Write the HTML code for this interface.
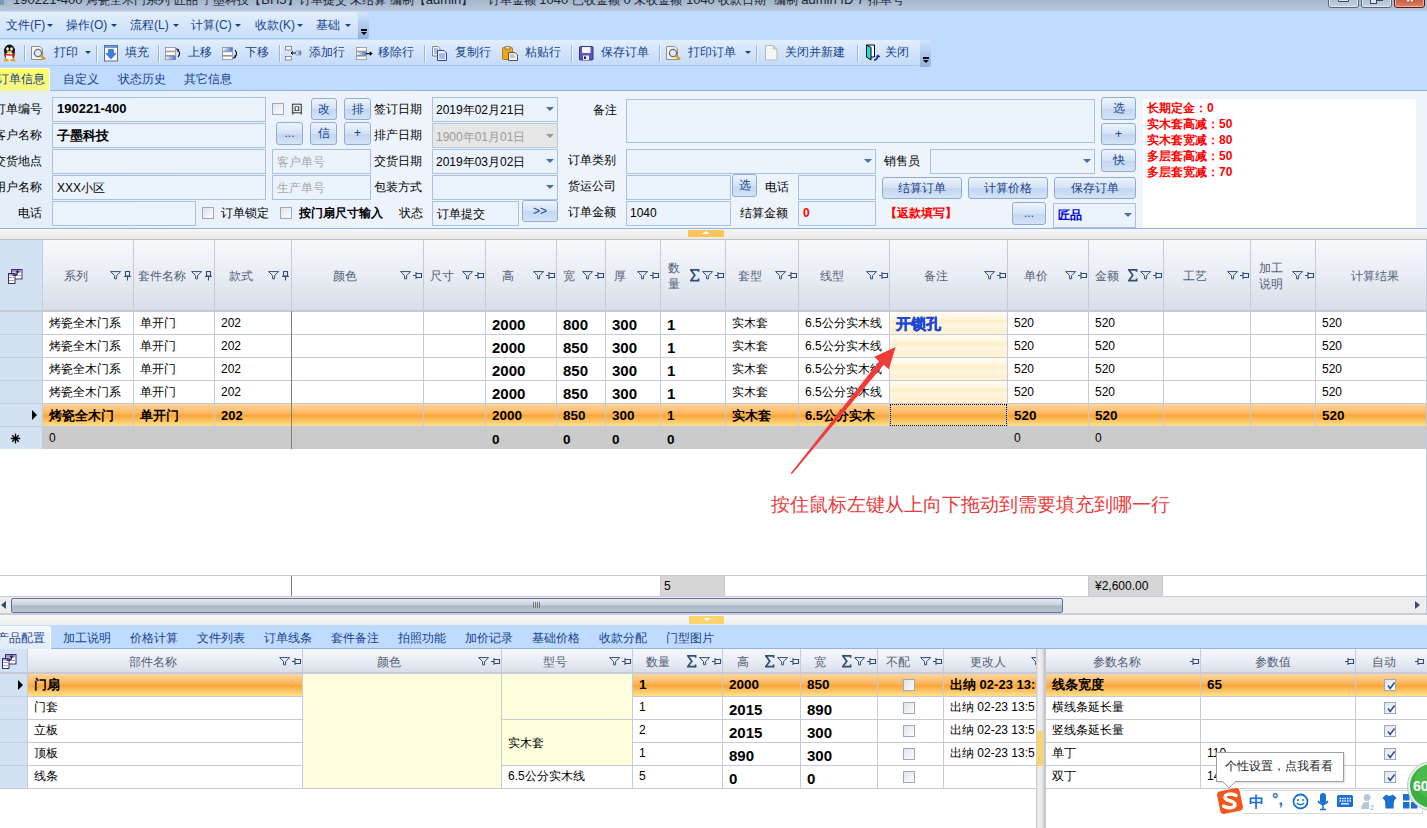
<!DOCTYPE html><html><head><meta charset="utf-8"><style>
html,body{margin:0;padding:0;width:1427px;height:828px;overflow:hidden;background:#fff;font-family:"Liberation Sans",sans-serif;font-size:12px;color:#000}
body>div, div div{position:absolute}
</style></head><body>
<div style="left:0px;top:0px;width:1427px;height:11px;background:linear-gradient(#a3b6cd,#b9c9dc);"></div>
<div style="left:0px;top:0px;width:4px;height:5px;background:#7d95b8;"></div>
<div style="left:13px;top:-9px;white-space:nowrap;height:18px;line-height:18px;font-size:13px;color:#1b2430;white-space:pre;">190221-400 <span style="font-size:12px">烤瓷全木门系列</span> <span style="font-size:12px">匠品</span> <span style="font-size:12px">子墨科技【</span>BH5<span style="font-size:12px">】订单提交</span> <span style="font-size:12px">未结算</span> <span style="font-size:12px">编制【</span>admin<span style="font-size:12px">】</span>    <span style="font-size:12px">订单金额</span> 1040 <span style="font-size:12px">已收金额</span> 0 <span style="font-size:12px">未收金额</span> 1040 <span style="font-size:12px">收款日期</span>  <span style="font-size:12px">编制</span> admin ID 7 <span style="font-size:12px">排单号</span></div>
<div style="left:1328px;top:-8px;width:31px;height:16px;background:linear-gradient(#9db2cc,#c4d3e5);border:1px solid #56657a;border-radius:3px;box-shadow:inset 0 0 0 1px #e4ecf5;box-sizing:border-box;"></div>
<div style="left:1338px;top:-6px;width:11px;height:8px;background:linear-gradient(#fff,#e0e0e0);border:1px solid #3a4452;border-radius:1px;box-sizing:border-box;"></div>
<div style="left:1361px;top:-8px;width:31px;height:16px;background:linear-gradient(#9db2cc,#c4d3e5);border:1px solid #56657a;border-radius:3px;box-shadow:inset 0 0 0 1px #e4ecf5;box-sizing:border-box;"></div>
<div style="left:1370px;top:-4px;width:7px;height:8px;background:#dfe6ee;border:1px solid #3a4452;box-sizing:border-box;"></div>
<div style="left:1377px;top:-4px;width:6px;height:5px;background:#fff;border:1px solid #3a4452;border-left:none;box-sizing:border-box;"></div>
<div style="left:1394px;top:-8px;width:31px;height:16px;background:linear-gradient(#b8381c,#e08267);border:1px solid #5a1818;border-radius:3px;box-shadow:inset 0 0 0 1px #f0b5a0;box-sizing:border-box;"></div>
<svg style="position:absolute;left:1403px;top:-6px" width="14" height="9"><path d="M1.5,0 L12.5,0 L9,4 L11,8 L8,8 L7,6 L6,8 L3,8 L5,4 Z" fill="#f4f4f4" stroke="#8a4a3a" stroke-width="0.6"/></svg>
<div style="left:0px;top:11px;width:1427px;height:56px;background:#bfdbff;"></div>
<div style="left:0px;top:12px;width:358px;height:27px;background:linear-gradient(#e3eefb,#c9defa);border-radius:2px 2px 0 0;border-bottom:1px solid #a8c6ee;box-sizing:border-box;"></div>
<div style="left:358px;top:12px;width:11px;height:27px;background:linear-gradient(#d4e4f9,#8db1e0);border-radius:0 3px 3px 0;"></div>
<div style="left:361px;top:29px;width:6px;height:1.5px;background:#000"></div><div style="left:361px;top:32px;width:0;height:0;border-left:3px solid transparent;border-right:3px solid transparent;border-top:3.5px solid #000"></div>
<div style="left:6px;top:17px;white-space:nowrap;height:17px;line-height:17px;font-size:12px;color:#15428b;">文件(F)</div>
<div style="left:47px;top:24px;width:0;height:0;border-left:3px solid transparent;border-right:3px solid transparent;border-top:3px solid #15428b"></div>
<div style="left:66px;top:17px;white-space:nowrap;height:17px;line-height:17px;font-size:12px;color:#15428b;">操作(O)</div>
<div style="left:111px;top:24px;width:0;height:0;border-left:3px solid transparent;border-right:3px solid transparent;border-top:3px solid #15428b"></div>
<div style="left:130px;top:17px;white-space:nowrap;height:17px;line-height:17px;font-size:12px;color:#15428b;">流程(L)</div>
<div style="left:173px;top:24px;width:0;height:0;border-left:3px solid transparent;border-right:3px solid transparent;border-top:3px solid #15428b"></div>
<div style="left:191px;top:17px;white-space:nowrap;height:17px;line-height:17px;font-size:12px;color:#15428b;">计算(C)</div>
<div style="left:235px;top:24px;width:0;height:0;border-left:3px solid transparent;border-right:3px solid transparent;border-top:3px solid #15428b"></div>
<div style="left:255px;top:17px;white-space:nowrap;height:17px;line-height:17px;font-size:12px;color:#15428b;">收款(K)</div>
<div style="left:297px;top:24px;width:0;height:0;border-left:3px solid transparent;border-right:3px solid transparent;border-top:3px solid #15428b"></div>
<div style="left:316px;top:17px;white-space:nowrap;height:17px;line-height:17px;font-size:12px;color:#15428b;">基础</div>
<div style="left:345px;top:24px;width:0;height:0;border-left:3px solid transparent;border-right:3px solid transparent;border-top:3px solid #15428b"></div>
<div style="left:0px;top:40px;width:920px;height:26px;background:linear-gradient(#e3eefb 0%,#d2e4fb 50%,#c4dbf9 100%);border-bottom:1px solid #a8c6ee;border-radius:0 2px 2px 0;box-sizing:border-box;"></div>
<div style="left:920px;top:40px;width:11px;height:27px;background:linear-gradient(#d4e4f9,#8db1e0);border-radius:0 3px 3px 0;"></div>
<div style="left:923px;top:57px;width:6px;height:1.5px;background:#000"></div><div style="left:923px;top:60px;width:0;height:0;border-left:3px solid transparent;border-right:3px solid transparent;border-top:3.5px solid #000"></div>
<div style="left:24px;top:45px;width:1px;height:17px;background:#9ab6dc;border-right:1px solid #f4f8fe;"></div>
<div style="left:96px;top:45px;width:1px;height:17px;background:#9ab6dc;border-right:1px solid #f4f8fe;"></div>
<div style="left:158px;top:45px;width:1px;height:17px;background:#9ab6dc;border-right:1px solid #f4f8fe;"></div>
<div style="left:279px;top:45px;width:1px;height:17px;background:#9ab6dc;border-right:1px solid #f4f8fe;"></div>
<div style="left:424px;top:45px;width:1px;height:17px;background:#9ab6dc;border-right:1px solid #f4f8fe;"></div>
<div style="left:571px;top:45px;width:1px;height:17px;background:#9ab6dc;border-right:1px solid #f4f8fe;"></div>
<div style="left:659px;top:45px;width:1px;height:17px;background:#9ab6dc;border-right:1px solid #f4f8fe;"></div>
<div style="left:756px;top:45px;width:1px;height:17px;background:#9ab6dc;border-right:1px solid #f4f8fe;"></div>
<div style="left:857px;top:45px;width:1px;height:17px;background:#9ab6dc;border-right:1px solid #f4f8fe;"></div>
<div style="left:54px;top:44px;white-space:nowrap;height:17px;line-height:17px;font-size:12px;color:#15428b;">打印</div>
<div style="left:125px;top:44px;white-space:nowrap;height:17px;line-height:17px;font-size:12px;color:#15428b;">填充</div>
<div style="left:188px;top:44px;white-space:nowrap;height:17px;line-height:17px;font-size:12px;color:#15428b;">上移</div>
<div style="left:245px;top:44px;white-space:nowrap;height:17px;line-height:17px;font-size:12px;color:#15428b;">下移</div>
<div style="left:309px;top:44px;white-space:nowrap;height:17px;line-height:17px;font-size:12px;color:#15428b;">添加行</div>
<div style="left:378px;top:44px;white-space:nowrap;height:17px;line-height:17px;font-size:12px;color:#15428b;">移除行</div>
<div style="left:455px;top:44px;white-space:nowrap;height:17px;line-height:17px;font-size:12px;color:#15428b;">复制行</div>
<div style="left:525px;top:44px;white-space:nowrap;height:17px;line-height:17px;font-size:12px;color:#15428b;">粘贴行</div>
<div style="left:601px;top:44px;white-space:nowrap;height:17px;line-height:17px;font-size:12px;color:#15428b;">保存订单</div>
<div style="left:688px;top:44px;white-space:nowrap;height:17px;line-height:17px;font-size:12px;color:#15428b;">打印订单</div>
<div style="left:785px;top:44px;white-space:nowrap;height:17px;line-height:17px;font-size:12px;color:#15428b;">关闭并新建</div>
<div style="left:885px;top:44px;white-space:nowrap;height:17px;line-height:17px;font-size:12px;color:#15428b;">关闭</div>
<div style="left:85px;top:51px;width:0;height:0;border-left:3px solid transparent;border-right:3px solid transparent;border-top:3px solid #15428b"></div>
<div style="left:745px;top:51px;width:0;height:0;border-left:3px solid transparent;border-right:3px solid transparent;border-top:3px solid #15428b"></div>
<svg style="position:absolute;left:2px;top:44px" width="15" height="18"><ellipse cx="7.5" cy="7" rx="5.5" ry="6.5" fill="#111"/><ellipse cx="7.5" cy="11.5" rx="5" ry="4.5" fill="#111"/><ellipse cx="7.5" cy="12" rx="3.8" ry="4" fill="#fff"/><ellipse cx="5.5" cy="5" rx="1.3" ry="1.8" fill="#fff"/><ellipse cx="9.5" cy="5" rx="1.3" ry="1.8" fill="#fff"/><path d="M4.5,7.5 Q7.5,6 10.5,7.5 L7.5,9.5 Z" fill="#f5b90c"/><path d="M2,9 Q7.5,11.5 13,9 L13,10.5 Q7.5,13 2,10.5 Z" fill="#e21818"/><path d="M10,10 L12.5,13.5 L10.5,13.5 Z" fill="#e21818"/><ellipse cx="4" cy="16.3" rx="2.6" ry="1.3" fill="#f5a00c"/><ellipse cx="11" cy="16.3" rx="2.6" ry="1.3" fill="#f5a00c"/></svg>
<svg style="position:absolute;left:31px;top:46px" width="16" height="15"><path d="M0.5,0.5 H9 L11.5,3 V13.5 H0.5 Z" fill="#f4f4f4" stroke="#8c8c8c"/><circle cx="7" cy="7" r="3.6" fill="#dfe9f3" stroke="#6d6d6d" stroke-width="1.3"/><path d="M9.5,9.5 L14,13.5" stroke="#e09a20" stroke-width="2.4"/></svg>
<svg style="position:absolute;left:666px;top:46px" width="16" height="15"><path d="M0.5,0.5 H9 L11.5,3 V13.5 H0.5 Z" fill="#f4f4f4" stroke="#8c8c8c"/><circle cx="7" cy="7" r="3.6" fill="#dfe9f3" stroke="#6d6d6d" stroke-width="1.3"/><path d="M9.5,9.5 L14,13.5" stroke="#e09a20" stroke-width="2.4"/></svg>
<svg style="position:absolute;left:104px;top:45px" width="14" height="17"><rect x="0.5" y="0.5" width="13" height="15.5" fill="#f4f7fb" stroke="#5d6f8e"/><rect x="1" y="1" width="12" height="2" fill="#6c9be0"/><path d="M4.5,4.5 H9.5 V8.5 H12 L7,14 L2,8.5 H4.5 Z" fill="#3d7fdd" stroke="#2b5fb0" stroke-width="0.6"/></svg>
<svg style="position:absolute;left:165px;top:47px" width="17" height="14"><defs><linearGradient id="gb" x1="0" x2="1"><stop offset="0" stop-color="#fff"/><stop offset="1" stop-color="#3a6ee0"/></linearGradient></defs><rect x="0.5" y="0.5" width="10" height="3.6" fill="#fafafa" stroke="#808080" stroke-width="0.7"/><rect x="0.5" y="4.8" width="10" height="3.6" fill="#fafafa" stroke="#808080" stroke-width="0.7"/><rect x="0.5" y="9.1" width="10" height="3.6" fill="url(#gb)" stroke="#808080" stroke-width="0.7"/><path d="M13,3 Q16,6.5 13,10" fill="none" stroke="#000" stroke-width="1.1"/><path d="M11,2 L13.5,2.5 L12.5,4.5" fill="none" stroke="#000" stroke-width="1"/></svg>
<svg style="position:absolute;left:222px;top:47px" width="17" height="14"><defs><linearGradient id="gb" x1="0" x2="1"><stop offset="0" stop-color="#fff"/><stop offset="1" stop-color="#3a6ee0"/></linearGradient></defs><rect x="0.5" y="0.5" width="10" height="3.6" fill="url(#gb)" stroke="#808080" stroke-width="0.7"/><rect x="0.5" y="4.8" width="10" height="3.6" fill="#fafafa" stroke="#808080" stroke-width="0.7"/><rect x="0.5" y="9.1" width="10" height="3.6" fill="#fafafa" stroke="#808080" stroke-width="0.7"/><path d="M13,3 Q16,6.5 13,10" fill="none" stroke="#000" stroke-width="1.1"/><path d="M11,11 L13.5,10.5 L12.5,8.5" fill="none" stroke="#000" stroke-width="1"/></svg>
<svg style="position:absolute;left:285px;top:46px" width="17" height="15"><defs><linearGradient id="gb" x1="0" x2="1"><stop offset="0" stop-color="#fff"/><stop offset="1" stop-color="#3a6ee0"/></linearGradient></defs><rect x="0.5" y="0.5" width="6" height="3.5" fill="#fafafa" stroke="#777" stroke-width="0.8"/><rect x="0.5" y="10.5" width="6" height="3.5" fill="#fafafa" stroke="#777" stroke-width="0.8"/><path d="M6,7 H11 M8,5.3 L6,7 L8,8.7" fill="none" stroke="#000" stroke-width="1"/><rect x="11" y="5" width="5" height="4" fill="url(#gb)" stroke="#888" stroke-width="0.6"/></svg>
<svg style="position:absolute;left:356px;top:47px" width="17" height="14"><defs><linearGradient id="gb" x1="0" x2="1"><stop offset="0" stop-color="#fff"/><stop offset="1" stop-color="#3a6ee0"/></linearGradient></defs><rect x="0.5" y="0.5" width="10" height="3.6" fill="#fafafa" stroke="#808080" stroke-width="0.7"/><rect x="0.5" y="4.8" width="10" height="3.6" fill="url(#gb)" stroke="#808080" stroke-width="0.7"/><rect x="0.5" y="9.1" width="10" height="3.6" fill="#fafafa" stroke="#808080" stroke-width="0.7"/><path d="M10.5,6.6 H15.5 M13.8,5 L15.8,6.6 L13.8,8.2" fill="none" stroke="#000" stroke-width="1.1"/></svg>
<svg style="position:absolute;left:432px;top:46px" width="16" height="15"><path d="M0.5,0.5 H6 L8,2.5 V10 H0.5 Z" fill="#f4f4f4" stroke="#777" stroke-width="0.9"/><path d="M2,3 H6 M2,5 H6 M2,7 H6" stroke="#3a6ee0" stroke-width="0.8"/><path d="M5.5,4.5 H12 L14.5,7 V14.5 H5.5 Z" fill="#f8f8ff" stroke="#2a3ea0" stroke-width="1"/><path d="M7,8 H13 M7,10 H13 M7,12 H13" stroke="#3a6ee0" stroke-width="0.9"/></svg>
<svg style="position:absolute;left:502px;top:46px" width="16" height="15"><rect x="0.5" y="1.5" width="10" height="12" rx="1" fill="#f2a51a" stroke="#a06a10" stroke-width="0.8"/><rect x="3" y="0.5" width="5" height="2.5" fill="#e8e0c0" stroke="#7a6a40" stroke-width="0.7"/><path d="M6.5,6.5 H13 L15.5,9 V14.5 H6.5 Z" fill="#f0f0f0" stroke="#444" stroke-width="0.9"/><path d="M8,9 H12 M8,11 H13" stroke="#888" stroke-width="0.8"/></svg>
<svg style="position:absolute;left:579px;top:46px" width="15" height="15"><rect x="0.5" y="0.5" width="13.5" height="13.5" rx="1" fill="#5a56c0" stroke="#2a2880" stroke-width="0.9"/><rect x="3" y="1" width="8.5" height="6" fill="#f4f4fa"/><rect x="4" y="9.5" width="6" height="4.5" fill="#e8e8f0"/><rect x="5" y="10.5" width="2" height="2.5" fill="#222"/></svg>
<svg style="position:absolute;left:765px;top:45px" width="13" height="16"><path d="M0.5,0.5 H8.5 L12,4 V15 H0.5 Z" fill="#f5f5f5" stroke="#b8b8b8"/><path d="M8.5,0.5 V4 H12" fill="#ddd" stroke="#b8b8b8"/></svg>
<svg style="position:absolute;left:865px;top:44px" width="17" height="18"><path d="M1.5,1 H9.5 V13 H1.5 Z" fill="#fff" stroke="#000" stroke-width="1"/><path d="M1.5,1 L6,3.5 V16 L1.5,13 Z" fill="#18e0e8" stroke="#000" stroke-width="1"/><path d="M9,16 Q12,16 13,12 M11.3,13 L13,11.5 L14.7,13" fill="none" stroke="#1428b0" stroke-width="1.5"/></svg>
<div style="left:0px;top:67px;width:1427px;height:24px;background:#bfdbff;border-bottom:1px solid #8db2e3;box-sizing:border-box;"></div>
<div style="left:0px;top:68px;width:50px;height:23px;background:linear-gradient(#ffff60,#f4f58c);border:1px solid #fff;border-left:none;border-bottom:none;border-radius:0 3px 0 0;box-sizing:border-box;"></div>
<div style="left:-3px;top:71px;white-space:nowrap;height:17px;line-height:17px;font-size:12px;color:#15428b;">订单信息</div>
<div style="left:63px;top:71px;white-space:nowrap;height:17px;line-height:17px;font-size:12px;color:#15428b;">自定义</div>
<div style="left:118px;top:71px;white-space:nowrap;height:17px;line-height:17px;font-size:12px;color:#15428b;">状态历史</div>
<div style="left:184px;top:71px;white-space:nowrap;height:17px;line-height:17px;font-size:12px;color:#15428b;">其它信息</div>
<div style="left:0px;top:91px;width:1427px;height:138px;background:linear-gradient(90deg,#e4eef9,#eef4fc 30%,#eef4fc);border-bottom:1px solid #8db2e3;box-sizing:border-box;"></div>
<div style="left:-48px;top:101px;width:90px;height:17px;line-height:17px;font-size:12px;color:#000;text-align:right;">订单编号</div>
<div style="left:-48px;top:127px;width:90px;height:17px;line-height:17px;font-size:12px;color:#000;text-align:right;">客户名称</div>
<div style="left:-48px;top:153px;width:90px;height:17px;line-height:17px;font-size:12px;color:#000;text-align:right;">交货地点</div>
<div style="left:-48px;top:179px;width:90px;height:17px;line-height:17px;font-size:12px;color:#000;text-align:right;">用户名称</div>
<div style="left:-48px;top:205px;width:90px;height:17px;line-height:17px;font-size:12px;color:#000;text-align:right;">电话</div>
<div style="left:52px;top:97px;width:214px;height:25px;background:#eaf2fb;border:1px solid #a9c1e0;box-sizing:border-box;"><span style="position:absolute;left:4px;top:3px;font-weight:bold;font-size:13px">190221-400</span></div>
<div style="left:52px;top:123px;width:214px;height:25px;background:#eaf2fb;border:1px solid #a9c1e0;box-sizing:border-box;"><span style="position:absolute;left:4px;top:3px;font-weight:bold;font-size:13px">子墨科技</span></div>
<div style="left:52px;top:149px;width:214px;height:25px;background:#eaf2fb;border:1px solid #a9c1e0;box-sizing:border-box;"></div>
<div style="left:52px;top:175px;width:214px;height:25px;background:#eaf2fb;border:1px solid #a9c1e0;box-sizing:border-box;"><span style="position:absolute;left:4px;top:4px;font-size:12px">XXX小区</span></div>
<div style="left:52px;top:201px;width:144px;height:25px;background:#eaf2fb;border:1px solid #a9c1e0;box-sizing:border-box;"></div>
<div style="left:272px;top:103px;width:12px;height:12px;background:linear-gradient(135deg,#dfe3ea,#fdfdfe);border:1px solid #9aa9bf;box-sizing:border-box;"></div>
<div style="left:291px;top:101px;white-space:nowrap;height:16px;line-height:16px;font-size:12px;">回</div>
<div style="left:311px;top:98px;width:26px;height:22px;background:linear-gradient(#eef4fc,#d3e2f5 50%,#c3d6f0 51%,#d4e3f6);border:1px solid #8eacd4;border-radius:3px;box-sizing:border-box;text-align:center;color:#15428b;font-size:12px;line-height:20px;">改</div>
<div style="left:344px;top:98px;width:27px;height:22px;background:linear-gradient(#eef4fc,#d3e2f5 50%,#c3d6f0 51%,#d4e3f6);border:1px solid #8eacd4;border-radius:3px;box-sizing:border-box;text-align:center;color:#15428b;font-size:12px;line-height:20px;">排</div>
<div style="left:276px;top:122px;width:27px;height:23px;background:linear-gradient(#eef4fc,#d3e2f5 50%,#c3d6f0 51%,#d4e3f6);border:1px solid #8eacd4;border-radius:3px;box-sizing:border-box;text-align:center;color:#15428b;font-size:12px;line-height:21px;">...</div>
<div style="left:310px;top:122px;width:27px;height:23px;background:linear-gradient(#eef4fc,#d3e2f5 50%,#c3d6f0 51%,#d4e3f6);border:1px solid #8eacd4;border-radius:3px;box-sizing:border-box;text-align:center;color:#15428b;font-size:12px;line-height:21px;">信</div>
<div style="left:344px;top:122px;width:27px;height:23px;background:linear-gradient(#eef4fc,#d3e2f5 50%,#c3d6f0 51%,#d4e3f6);border:1px solid #8eacd4;border-radius:3px;box-sizing:border-box;text-align:center;color:#15428b;font-size:12px;line-height:21px;">+</div>
<div style="left:272px;top:149px;width:99px;height:25px;background:#eaf2fb;border:1px solid #a9c1e0;box-sizing:border-box;"><span style="position:absolute;left:4px;top:4px;font-size:12px;color:#a8a8a8">客户单号</span></div>
<div style="left:272px;top:175px;width:99px;height:25px;background:#eaf2fb;border:1px solid #a9c1e0;box-sizing:border-box;"><span style="position:absolute;left:4px;top:4px;font-size:12px;color:#a8a8a8">生产单号</span></div>
<div style="left:202px;top:207px;width:12px;height:12px;background:linear-gradient(135deg,#dfe3ea,#fdfdfe);border:1px solid #9aa9bf;box-sizing:border-box;"></div>
<div style="left:221px;top:205px;white-space:nowrap;height:16px;line-height:16px;font-size:12px;">订单锁定</div>
<div style="left:280px;top:207px;width:12px;height:12px;background:linear-gradient(135deg,#dfe3ea,#fdfdfe);border:1px solid #9aa9bf;box-sizing:border-box;"></div>
<div style="left:299px;top:205px;white-space:nowrap;height:16px;line-height:16px;font-size:12px;font-weight:bold;">按门扇尺寸输入</div>
<div style="left:374px;top:101px;white-space:nowrap;height:17px;line-height:17px;font-size:12px;">签订日期</div>
<div style="left:374px;top:127px;white-space:nowrap;height:17px;line-height:17px;font-size:12px;">排产日期</div>
<div style="left:374px;top:153px;white-space:nowrap;height:17px;line-height:17px;font-size:12px;">交货日期</div>
<div style="left:374px;top:179px;white-space:nowrap;height:17px;line-height:17px;font-size:12px;">包装方式</div>
<div style="left:399px;top:205px;white-space:nowrap;height:17px;line-height:17px;font-size:12px;">状态</div>
<div style="left:432px;top:97px;width:126px;height:25px;background:#eaf2fb;border:1px solid #a9c1e0;box-sizing:border-box;"><span style="position:absolute;left:3px;top:4px;font-size:12px">2019年02月21日</span></div>
<div style="left:546px;top:107px;width:0;height:0;border-left:4px solid transparent;border-right:4px solid transparent;border-top:4px solid #4a6fa5"></div>
<div style="left:432px;top:123px;width:126px;height:25px;background:#eaf2fb;border:1px solid #a9c1e0;box-sizing:border-box;background:#e6e6e6;border-color:#b6c8de;"><span style="position:absolute;left:3px;top:5px;font-size:12px;color:#9a9a9a">1900年01月01日</span></div>
<div style="left:546px;top:134px;width:0;height:0;border-left:4px solid transparent;border-right:4px solid transparent;border-top:4px solid #9a9a9a"></div>
<div style="left:432px;top:149px;width:126px;height:25px;background:#eaf2fb;border:1px solid #a9c1e0;box-sizing:border-box;"><span style="position:absolute;left:3px;top:4px;font-size:12px">2019年03月02日</span></div>
<div style="left:546px;top:159px;width:0;height:0;border-left:4px solid transparent;border-right:4px solid transparent;border-top:4px solid #4a6fa5"></div>
<div style="left:432px;top:175px;width:126px;height:25px;background:#eaf2fb;border:1px solid #a9c1e0;box-sizing:border-box;"></div>
<div style="left:546px;top:185px;width:0;height:0;border-left:4px solid transparent;border-right:4px solid transparent;border-top:4px solid #4a6fa5"></div>
<div style="left:432px;top:201px;width:87px;height:25px;background:#eaf2fb;border:1px solid #a9c1e0;box-sizing:border-box;"><span style="position:absolute;left:4px;top:4px;font-size:12px">订单提交</span></div>
<div style="left:522px;top:200px;width:36px;height:22px;background:linear-gradient(#eef4fc,#d3e2f5 50%,#c3d6f0 51%,#d4e3f6);border:1px solid #8eacd4;border-radius:3px;box-sizing:border-box;text-align:center;color:#15428b;font-size:12px;line-height:20px;">&gt;&gt;</div>
<div style="left:593px;top:102px;white-space:nowrap;height:17px;line-height:17px;font-size:12px;">备注</div>
<div style="left:568px;top:152px;white-space:nowrap;height:17px;line-height:17px;font-size:12px;">订单类别</div>
<div style="left:568px;top:178px;white-space:nowrap;height:17px;line-height:17px;font-size:12px;">货运公司</div>
<div style="left:568px;top:204px;white-space:nowrap;height:17px;line-height:17px;font-size:12px;">订单金额</div>
<div style="left:626px;top:99px;width:469px;height:44px;background:#eaf2fb;border:1px solid #a9c1e0;box-sizing:border-box;"></div>
<div style="left:626px;top:149px;width:250px;height:25px;background:#eaf2fb;border:1px solid #a9c1e0;box-sizing:border-box;"></div>
<div style="left:864px;top:159px;width:0;height:0;border-left:4px solid transparent;border-right:4px solid transparent;border-top:4px solid #4a6fa5"></div>
<div style="left:626px;top:175px;width:105px;height:25px;background:#eaf2fb;border:1px solid #a9c1e0;box-sizing:border-box;"></div>
<div style="left:732px;top:174px;width:25px;height:23px;background:linear-gradient(#eef4fc,#d3e2f5 50%,#c3d6f0 51%,#d4e3f6);border:1px solid #8eacd4;border-radius:3px;box-sizing:border-box;text-align:center;color:#15428b;font-size:12px;line-height:21px;">选</div>
<div style="left:626px;top:201px;width:105px;height:25px;background:#eaf2fb;border:1px solid #a9c1e0;box-sizing:border-box;"><span style="position:absolute;left:3px;top:4px;font-size:12px">1040</span></div>
<div style="left:765px;top:179px;white-space:nowrap;height:17px;line-height:17px;font-size:12px;">电话</div>
<div style="left:798px;top:175px;width:78px;height:25px;background:#eaf2fb;border:1px solid #a9c1e0;box-sizing:border-box;"></div>
<div style="left:740px;top:205px;white-space:nowrap;height:17px;line-height:17px;font-size:12px;">结算金额</div>
<div style="left:798px;top:201px;width:78px;height:25px;background:#eaf2fb;border:1px solid #a9c1e0;box-sizing:border-box;"><span style="position:absolute;left:4px;top:4px;font-size:12px;font-weight:bold;color:#f00">0</span></div>
<div style="left:884px;top:153px;white-space:nowrap;height:17px;line-height:17px;font-size:12px;">销售员</div>
<div style="left:930px;top:149px;width:165px;height:25px;background:#eaf2fb;border:1px solid #a9c1e0;box-sizing:border-box;"></div>
<div style="left:1083px;top:159px;width:0;height:0;border-left:4px solid transparent;border-right:4px solid transparent;border-top:4px solid #4a6fa5"></div>
<div style="left:1101px;top:97px;width:35px;height:23px;background:linear-gradient(#eef4fc,#d3e2f5 50%,#c3d6f0 51%,#d4e3f6);border:1px solid #8eacd4;border-radius:3px;box-sizing:border-box;text-align:center;color:#15428b;font-size:12px;line-height:21px;">选</div>
<div style="left:1101px;top:123px;width:35px;height:22px;background:linear-gradient(#eef4fc,#d3e2f5 50%,#c3d6f0 51%,#d4e3f6);border:1px solid #8eacd4;border-radius:3px;box-sizing:border-box;text-align:center;color:#15428b;font-size:12px;line-height:20px;">+</div>
<div style="left:1101px;top:149px;width:35px;height:23px;background:linear-gradient(#eef4fc,#d3e2f5 50%,#c3d6f0 51%,#d4e3f6);border:1px solid #8eacd4;border-radius:3px;box-sizing:border-box;text-align:center;color:#15428b;font-size:12px;line-height:21px;">快</div>
<div style="left:882px;top:177px;width:80px;height:22px;background:linear-gradient(#eef4fc,#d3e2f5 50%,#c3d6f0 51%,#d4e3f6);border:1px solid #8eacd4;border-radius:3px;box-sizing:border-box;text-align:center;color:#15428b;font-size:12px;line-height:20px;">结算订单</div>
<div style="left:968px;top:177px;width:80px;height:22px;background:linear-gradient(#eef4fc,#d3e2f5 50%,#c3d6f0 51%,#d4e3f6);border:1px solid #8eacd4;border-radius:3px;box-sizing:border-box;text-align:center;color:#15428b;font-size:12px;line-height:20px;">计算价格</div>
<div style="left:1054px;top:177px;width:82px;height:22px;background:linear-gradient(#eef4fc,#d3e2f5 50%,#c3d6f0 51%,#d4e3f6);border:1px solid #8eacd4;border-radius:3px;box-sizing:border-box;text-align:center;color:#15428b;font-size:12px;line-height:20px;">保存订单</div>
<div style="left:885px;top:205px;white-space:nowrap;height:17px;line-height:17px;font-size:12px;font-weight:bold;color:#f00;">【返款填写】</div>
<div style="left:1012px;top:202px;width:34px;height:23px;background:linear-gradient(#eef4fc,#d3e2f5 50%,#c3d6f0 51%,#d4e3f6);border:1px solid #8eacd4;border-radius:3px;box-sizing:border-box;text-align:center;color:#15428b;font-size:12px;line-height:21px;">...</div>
<div style="left:1053px;top:203px;width:83px;height:25px;background:#eaf2fb;border:1px solid #a9c1e0;box-sizing:border-box;"><span style="position:absolute;left:4px;top:3px;font-size:12px;font-weight:bold;color:#0000e0">匠品</span></div>
<div style="left:1124px;top:213px;width:0;height:0;border-left:4px solid transparent;border-right:4px solid transparent;border-top:4px solid #4a6fa5"></div>
<div style="left:1143px;top:99px;width:273px;height:129px;background:#fff;"></div>
<div style="left:1147px;top:100px;white-space:nowrap;height:17px;line-height:17px;font-size:12px;font-weight:bold;color:#f00;">长期定金：0</div>
<div style="left:1147px;top:116px;white-space:nowrap;height:17px;line-height:17px;font-size:12px;font-weight:bold;color:#f00;">实木套高减：50</div>
<div style="left:1147px;top:132px;white-space:nowrap;height:17px;line-height:17px;font-size:12px;font-weight:bold;color:#f00;">实木套宽减：80</div>
<div style="left:1147px;top:148px;white-space:nowrap;height:17px;line-height:17px;font-size:12px;font-weight:bold;color:#f00;">多层套高减：50</div>
<div style="left:1147px;top:164px;white-space:nowrap;height:17px;line-height:17px;font-size:12px;font-weight:bold;color:#f00;">多层套宽减：70</div>
<div style="left:0px;top:229px;width:1427px;height:11px;background:linear-gradient(#f7f7f7,#e9e9e9);border-bottom:1px solid #c2c2c2;box-sizing:border-box;"></div>
<div style="left:688px;top:230px;width:36px;height:7px;background:#fbc45a;"></div>
<div style="left:0px;top:240px;width:1427px;height:71px;background:linear-gradient(#f7f8fb,#e9edf4 50%,#d6dde9);"></div>
<div style="left:0px;top:240px;width:42px;height:72px;background:#d3e2f2;"></div>
<div style="left:42px;top:240px;width:1px;height:71px;background:#c5cad8;"></div>
<div style="left:133px;top:240px;width:1px;height:71px;background:#c5cad8;"></div>
<div style="left:214px;top:240px;width:1px;height:71px;background:#c5cad8;"></div>
<div style="left:291px;top:240px;width:1px;height:71px;background:#c5cad8;"></div>
<div style="left:423px;top:240px;width:1px;height:71px;background:#c5cad8;"></div>
<div style="left:485px;top:240px;width:1px;height:71px;background:#c5cad8;"></div>
<div style="left:556px;top:240px;width:1px;height:71px;background:#c5cad8;"></div>
<div style="left:605px;top:240px;width:1px;height:71px;background:#c5cad8;"></div>
<div style="left:660px;top:240px;width:1px;height:71px;background:#c5cad8;"></div>
<div style="left:725px;top:240px;width:1px;height:71px;background:#c5cad8;"></div>
<div style="left:798px;top:240px;width:1px;height:71px;background:#c5cad8;"></div>
<div style="left:889px;top:240px;width:1px;height:71px;background:#c5cad8;"></div>
<div style="left:1007px;top:240px;width:1px;height:71px;background:#c5cad8;"></div>
<div style="left:1088px;top:240px;width:1px;height:71px;background:#c5cad8;"></div>
<div style="left:1163px;top:240px;width:1px;height:71px;background:#c5cad8;"></div>
<div style="left:1250px;top:240px;width:1px;height:71px;background:#c5cad8;"></div>
<div style="left:1315px;top:240px;width:1px;height:71px;background:#c5cad8;"></div>
<div style="left:0px;top:310px;width:1427px;height:1px;background:#c5cad8;"></div>
<div style="left:64px;top:268px;white-space:nowrap;height:17px;line-height:17px;font-size:12px;color:#526079;">系列</div>
<svg style="position:absolute;left:110px;top:271px" width="12" height="9"><path d="M0.6,0.6 H10.6 L6.6,4.6 V7.8 H4.6 V4.6 Z" fill="none" stroke="#2e4d7b" stroke-width="1"/></svg>
<svg style="position:absolute;left:124px;top:271px" width="8" height="10"><path d="M1.5,0.5 H5.5 V5 H1.5 Z M0,5.5 H7 M3.5,5.5 V9.5" fill="none" stroke="#2e4d7b" stroke-width="1.1"/></svg>
<div style="left:138px;top:268px;white-space:nowrap;height:17px;line-height:17px;font-size:12px;color:#526079;">套件名称</div>
<svg style="position:absolute;left:191px;top:271px" width="12" height="9"><path d="M0.6,0.6 H10.6 L6.6,4.6 V7.8 H4.6 V4.6 Z" fill="none" stroke="#2e4d7b" stroke-width="1"/></svg>
<svg style="position:absolute;left:205px;top:271px" width="8" height="10"><path d="M1.5,0.5 H5.5 V5 H1.5 Z M0,5.5 H7 M3.5,5.5 V9.5" fill="none" stroke="#2e4d7b" stroke-width="1.1"/></svg>
<div style="left:229px;top:268px;white-space:nowrap;height:17px;line-height:17px;font-size:12px;color:#526079;">款式</div>
<svg style="position:absolute;left:268px;top:271px" width="12" height="9"><path d="M0.6,0.6 H10.6 L6.6,4.6 V7.8 H4.6 V4.6 Z" fill="none" stroke="#2e4d7b" stroke-width="1"/></svg>
<svg style="position:absolute;left:282px;top:271px" width="8" height="10"><path d="M1.5,0.5 H5.5 V5 H1.5 Z M0,5.5 H7 M3.5,5.5 V9.5" fill="none" stroke="#2e4d7b" stroke-width="1.1"/></svg>
<div style="left:333px;top:268px;white-space:nowrap;height:17px;line-height:17px;font-size:12px;color:#526079;">颜色</div>
<svg style="position:absolute;left:400px;top:271px" width="12" height="9"><path d="M0.6,0.6 H10.6 L6.6,4.6 V7.8 H4.6 V4.6 Z" fill="none" stroke="#2e4d7b" stroke-width="1"/></svg>
<svg style="position:absolute;left:413px;top:272px" width="10" height="8"><path d="M0,3.5 H3 M3,0 V7 M3,1.5 H8.5 V5.5 H3" fill="none" stroke="#2e4d7b" stroke-width="1.1"/></svg>
<div style="left:430px;top:268px;white-space:nowrap;height:17px;line-height:17px;font-size:12px;color:#526079;">尺寸</div>
<svg style="position:absolute;left:462px;top:271px" width="12" height="9"><path d="M0.6,0.6 H10.6 L6.6,4.6 V7.8 H4.6 V4.6 Z" fill="none" stroke="#2e4d7b" stroke-width="1"/></svg>
<svg style="position:absolute;left:475px;top:272px" width="10" height="8"><path d="M0,3.5 H3 M3,0 V7 M3,1.5 H8.5 V5.5 H3" fill="none" stroke="#2e4d7b" stroke-width="1.1"/></svg>
<div style="left:502px;top:268px;white-space:nowrap;height:17px;line-height:17px;font-size:12px;color:#526079;">高</div>
<svg style="position:absolute;left:533px;top:271px" width="12" height="9"><path d="M0.6,0.6 H10.6 L6.6,4.6 V7.8 H4.6 V4.6 Z" fill="none" stroke="#2e4d7b" stroke-width="1"/></svg>
<svg style="position:absolute;left:546px;top:272px" width="10" height="8"><path d="M0,3.5 H3 M3,0 V7 M3,1.5 H8.5 V5.5 H3" fill="none" stroke="#2e4d7b" stroke-width="1.1"/></svg>
<div style="left:563px;top:268px;white-space:nowrap;height:17px;line-height:17px;font-size:12px;color:#526079;">宽</div>
<svg style="position:absolute;left:582px;top:271px" width="12" height="9"><path d="M0.6,0.6 H10.6 L6.6,4.6 V7.8 H4.6 V4.6 Z" fill="none" stroke="#2e4d7b" stroke-width="1"/></svg>
<svg style="position:absolute;left:595px;top:272px" width="10" height="8"><path d="M0,3.5 H3 M3,0 V7 M3,1.5 H8.5 V5.5 H3" fill="none" stroke="#2e4d7b" stroke-width="1.1"/></svg>
<div style="left:614px;top:268px;white-space:nowrap;height:17px;line-height:17px;font-size:12px;color:#526079;">厚</div>
<svg style="position:absolute;left:637px;top:271px" width="12" height="9"><path d="M0.6,0.6 H10.6 L6.6,4.6 V7.8 H4.6 V4.6 Z" fill="none" stroke="#2e4d7b" stroke-width="1"/></svg>
<svg style="position:absolute;left:650px;top:272px" width="10" height="8"><path d="M0,3.5 H3 M3,0 V7 M3,1.5 H8.5 V5.5 H3" fill="none" stroke="#2e4d7b" stroke-width="1.1"/></svg>
<div style="left:668px;top:260px;white-space:nowrap;height:32px;line-height:32px;font-size:12px;color:#526079;line-height:16px;">数<br>量</div>
<svg style="position:absolute;left:690px;top:269px" width="10" height="13"><path d="M8.6,2.8 V0.8 H0.8 L4.8,6.3 L0.8,11.6 H8.6 V9.6" fill="none" stroke="#2e4d7b" stroke-width="1.7"/></svg>
<svg style="position:absolute;left:702px;top:271px" width="12" height="9"><path d="M0.6,0.6 H10.6 L6.6,4.6 V7.8 H4.6 V4.6 Z" fill="none" stroke="#2e4d7b" stroke-width="1"/></svg>
<svg style="position:absolute;left:715px;top:272px" width="10" height="8"><path d="M0,3.5 H3 M3,0 V7 M3,1.5 H8.5 V5.5 H3" fill="none" stroke="#2e4d7b" stroke-width="1.1"/></svg>
<div style="left:738px;top:268px;white-space:nowrap;height:17px;line-height:17px;font-size:12px;color:#526079;">套型</div>
<svg style="position:absolute;left:775px;top:271px" width="12" height="9"><path d="M0.6,0.6 H10.6 L6.6,4.6 V7.8 H4.6 V4.6 Z" fill="none" stroke="#2e4d7b" stroke-width="1"/></svg>
<svg style="position:absolute;left:788px;top:272px" width="10" height="8"><path d="M0,3.5 H3 M3,0 V7 M3,1.5 H8.5 V5.5 H3" fill="none" stroke="#2e4d7b" stroke-width="1.1"/></svg>
<div style="left:820px;top:268px;white-space:nowrap;height:17px;line-height:17px;font-size:12px;color:#526079;">线型</div>
<svg style="position:absolute;left:866px;top:271px" width="12" height="9"><path d="M0.6,0.6 H10.6 L6.6,4.6 V7.8 H4.6 V4.6 Z" fill="none" stroke="#2e4d7b" stroke-width="1"/></svg>
<svg style="position:absolute;left:879px;top:272px" width="10" height="8"><path d="M0,3.5 H3 M3,0 V7 M3,1.5 H8.5 V5.5 H3" fill="none" stroke="#2e4d7b" stroke-width="1.1"/></svg>
<div style="left:924px;top:268px;white-space:nowrap;height:17px;line-height:17px;font-size:12px;color:#526079;">备注</div>
<svg style="position:absolute;left:984px;top:271px" width="12" height="9"><path d="M0.6,0.6 H10.6 L6.6,4.6 V7.8 H4.6 V4.6 Z" fill="none" stroke="#2e4d7b" stroke-width="1"/></svg>
<svg style="position:absolute;left:997px;top:272px" width="10" height="8"><path d="M0,3.5 H3 M3,0 V7 M3,1.5 H8.5 V5.5 H3" fill="none" stroke="#2e4d7b" stroke-width="1.1"/></svg>
<div style="left:1024px;top:268px;white-space:nowrap;height:17px;line-height:17px;font-size:12px;color:#526079;">单价</div>
<svg style="position:absolute;left:1065px;top:271px" width="12" height="9"><path d="M0.6,0.6 H10.6 L6.6,4.6 V7.8 H4.6 V4.6 Z" fill="none" stroke="#2e4d7b" stroke-width="1"/></svg>
<svg style="position:absolute;left:1078px;top:272px" width="10" height="8"><path d="M0,3.5 H3 M3,0 V7 M3,1.5 H8.5 V5.5 H3" fill="none" stroke="#2e4d7b" stroke-width="1.1"/></svg>
<div style="left:1095px;top:268px;white-space:nowrap;height:17px;line-height:17px;font-size:12px;color:#526079;">金额</div>
<svg style="position:absolute;left:1128px;top:269px" width="10" height="13"><path d="M8.6,2.8 V0.8 H0.8 L4.8,6.3 L0.8,11.6 H8.6 V9.6" fill="none" stroke="#2e4d7b" stroke-width="1.7"/></svg>
<svg style="position:absolute;left:1140px;top:271px" width="12" height="9"><path d="M0.6,0.6 H10.6 L6.6,4.6 V7.8 H4.6 V4.6 Z" fill="none" stroke="#2e4d7b" stroke-width="1"/></svg>
<svg style="position:absolute;left:1153px;top:272px" width="10" height="8"><path d="M0,3.5 H3 M3,0 V7 M3,1.5 H8.5 V5.5 H3" fill="none" stroke="#2e4d7b" stroke-width="1.1"/></svg>
<div style="left:1183px;top:268px;white-space:nowrap;height:17px;line-height:17px;font-size:12px;color:#526079;">工艺</div>
<svg style="position:absolute;left:1227px;top:271px" width="12" height="9"><path d="M0.6,0.6 H10.6 L6.6,4.6 V7.8 H4.6 V4.6 Z" fill="none" stroke="#2e4d7b" stroke-width="1"/></svg>
<svg style="position:absolute;left:1240px;top:272px" width="10" height="8"><path d="M0,3.5 H3 M3,0 V7 M3,1.5 H8.5 V5.5 H3" fill="none" stroke="#2e4d7b" stroke-width="1.1"/></svg>
<div style="left:1259px;top:260px;white-space:nowrap;height:32px;line-height:32px;font-size:12px;color:#526079;line-height:16px;">加工<br>说明</div>
<svg style="position:absolute;left:1292px;top:271px" width="12" height="9"><path d="M0.6,0.6 H10.6 L6.6,4.6 V7.8 H4.6 V4.6 Z" fill="none" stroke="#2e4d7b" stroke-width="1"/></svg>
<svg style="position:absolute;left:1305px;top:272px" width="10" height="8"><path d="M0,3.5 H3 M3,0 V7 M3,1.5 H8.5 V5.5 H3" fill="none" stroke="#2e4d7b" stroke-width="1.1"/></svg>
<div style="left:1351px;top:268px;white-space:nowrap;height:17px;line-height:17px;font-size:12px;color:#526079;">计算结果</div>
<svg style="position:absolute;left:8px;top:269px" width="16" height="16"><rect x="3.5" y="0.5" width="10.5" height="9.5" fill="#fff" stroke="#34306e"/><rect x="4" y="1" width="9.5" height="2.5" fill="#9a92d0"/><path d="M4,6.5 H13.5" stroke="#a59ed4"/><rect x="0.5" y="4.5" width="6.5" height="10" fill="#fff" stroke="#34306e"/><rect x="1" y="5" width="5.5" height="1.5" fill="#9a92d0"/><path d="M1,8.5 H6.5 M1,11.5 H6.5" stroke="#a59ed4"/><path d="M4.5,6.2 H7 Q9.5,6.2 9.5,3.2" fill="none" stroke="#1c1a40" stroke-width="1.2"/><path d="M7.5,3.5 L9.5,1 L11.5,3.5 Z" fill="#1c1a40"/></svg>
<div style="left:0px;top:311px;width:42px;height:138px;background:#d3e2f2;"></div>
<div style="left:42px;top:311px;width:1385px;height:23px;background:#fff;"></div>
<div style="left:889px;top:312px;width:118px;height:22px;background:linear-gradient(#fffcf4 0%,#fff7e2 25%,#ffedc6 42%,#fff7e4 58%,#fff0d0 82%,#fff3da 100%);"></div>
<div style="left:42px;top:334px;width:1385px;height:23px;background:#fff;"></div>
<div style="left:889px;top:335px;width:118px;height:22px;background:linear-gradient(#fffcf4 0%,#fff7e2 25%,#ffedc6 42%,#fff7e4 58%,#fff0d0 82%,#fff3da 100%);"></div>
<div style="left:42px;top:357px;width:1385px;height:23px;background:#fff;"></div>
<div style="left:889px;top:358px;width:118px;height:22px;background:linear-gradient(#fffcf4 0%,#fff7e2 25%,#ffedc6 42%,#fff7e4 58%,#fff0d0 82%,#fff3da 100%);"></div>
<div style="left:42px;top:380px;width:1385px;height:23px;background:#fff;"></div>
<div style="left:889px;top:381px;width:118px;height:22px;background:linear-gradient(#fffcf4 0%,#fff7e2 25%,#ffedc6 42%,#fff7e4 58%,#fff0d0 82%,#fff3da 100%);"></div>
<div style="left:42px;top:403px;width:1385px;height:23px;background:linear-gradient(#fdd9a6 0%,#fbb75e 45%,#f9a73a 55%,#fde28e 100%);"></div>
<div style="left:42px;top:426px;width:1385px;height:23px;background:#cbcbcb;"></div>
<div style="left:0px;top:311px;width:1427px;height:1px;background:#c5cad8;"></div>
<div style="left:0px;top:334px;width:1427px;height:1px;background:#c5cad8;"></div>
<div style="left:0px;top:357px;width:1427px;height:1px;background:#c5cad8;"></div>
<div style="left:0px;top:380px;width:1427px;height:1px;background:#c5cad8;"></div>
<div style="left:0px;top:403px;width:1427px;height:1px;background:#c5cad8;"></div>
<div style="left:0px;top:426px;width:1427px;height:1px;background:#c5cad8;"></div>
<div style="left:0px;top:449px;width:1427px;height:1px;background:#c5cad8;"></div>
<div style="left:42px;top:311px;width:1px;height:138px;background:#c5cad8;"></div>
<div style="left:133px;top:311px;width:1px;height:138px;background:#c5cad8;"></div>
<div style="left:214px;top:311px;width:1px;height:138px;background:#c5cad8;"></div>
<div style="left:291px;top:311px;width:1px;height:138px;background:#c5cad8;"></div>
<div style="left:423px;top:311px;width:1px;height:138px;background:#c5cad8;"></div>
<div style="left:485px;top:311px;width:1px;height:138px;background:#c5cad8;"></div>
<div style="left:556px;top:311px;width:1px;height:138px;background:#c5cad8;"></div>
<div style="left:605px;top:311px;width:1px;height:138px;background:#c5cad8;"></div>
<div style="left:660px;top:311px;width:1px;height:138px;background:#c5cad8;"></div>
<div style="left:725px;top:311px;width:1px;height:138px;background:#c5cad8;"></div>
<div style="left:798px;top:311px;width:1px;height:138px;background:#c5cad8;"></div>
<div style="left:889px;top:311px;width:1px;height:138px;background:#c5cad8;"></div>
<div style="left:1007px;top:311px;width:1px;height:138px;background:#c5cad8;"></div>
<div style="left:1088px;top:311px;width:1px;height:138px;background:#c5cad8;"></div>
<div style="left:1163px;top:311px;width:1px;height:138px;background:#c5cad8;"></div>
<div style="left:1250px;top:311px;width:1px;height:138px;background:#c5cad8;"></div>
<div style="left:1315px;top:311px;width:1px;height:138px;background:#c5cad8;"></div>
<div style="left:291px;top:311px;width:1px;height:138px;background:#808080;"></div>
<div style="left:49px;top:314px;white-space:nowrap;height:18px;line-height:18px;font-size:12px;">烤瓷全木门系</div>
<div style="left:140px;top:314px;white-space:nowrap;height:18px;line-height:18px;font-size:12px;">单开门</div>
<div style="left:221px;top:314px;white-space:nowrap;height:18px;line-height:18px;font-size:12px;">202</div>
<div style="left:492px;top:316px;white-space:nowrap;height:18px;line-height:18px;font-weight:bold;font-size:15px;">2000</div>
<div style="left:563px;top:316px;white-space:nowrap;height:18px;line-height:18px;font-weight:bold;font-size:15px;">800</div>
<div style="left:612px;top:316px;white-space:nowrap;height:18px;line-height:18px;font-weight:bold;font-size:15px;">300</div>
<div style="left:667px;top:316px;white-space:nowrap;height:18px;line-height:18px;font-weight:bold;font-size:15px;">1</div>
<div style="left:732px;top:314px;white-space:nowrap;height:18px;line-height:18px;font-size:12px;">实木套</div>
<div style="left:805px;top:314px;white-space:nowrap;height:18px;line-height:18px;font-size:12px;">6.5公分实木线</div>
<div style="left:896px;top:315px;white-space:nowrap;height:19px;line-height:19px;font-weight:bold;font-size:14.5px;color:#1b46d6;-webkit-text-stroke:0.5px #1b46d6;">开锁孔</div>
<div style="left:1014px;top:314px;white-space:nowrap;height:18px;line-height:18px;font-size:12px;">520</div>
<div style="left:1095px;top:314px;white-space:nowrap;height:18px;line-height:18px;font-size:12px;">520</div>
<div style="left:1322px;top:314px;white-space:nowrap;height:18px;line-height:18px;font-size:12px;">520</div>
<div style="left:49px;top:337px;white-space:nowrap;height:18px;line-height:18px;font-size:12px;">烤瓷全木门系</div>
<div style="left:140px;top:337px;white-space:nowrap;height:18px;line-height:18px;font-size:12px;">单开门</div>
<div style="left:221px;top:337px;white-space:nowrap;height:18px;line-height:18px;font-size:12px;">202</div>
<div style="left:492px;top:339px;white-space:nowrap;height:18px;line-height:18px;font-weight:bold;font-size:15px;">2000</div>
<div style="left:563px;top:339px;white-space:nowrap;height:18px;line-height:18px;font-weight:bold;font-size:15px;">850</div>
<div style="left:612px;top:339px;white-space:nowrap;height:18px;line-height:18px;font-weight:bold;font-size:15px;">300</div>
<div style="left:667px;top:339px;white-space:nowrap;height:18px;line-height:18px;font-weight:bold;font-size:15px;">1</div>
<div style="left:732px;top:337px;white-space:nowrap;height:18px;line-height:18px;font-size:12px;">实木套</div>
<div style="left:805px;top:337px;white-space:nowrap;height:18px;line-height:18px;font-size:12px;">6.5公分实木线</div>
<div style="left:1014px;top:337px;white-space:nowrap;height:18px;line-height:18px;font-size:12px;">520</div>
<div style="left:1095px;top:337px;white-space:nowrap;height:18px;line-height:18px;font-size:12px;">520</div>
<div style="left:1322px;top:337px;white-space:nowrap;height:18px;line-height:18px;font-size:12px;">520</div>
<div style="left:49px;top:360px;white-space:nowrap;height:18px;line-height:18px;font-size:12px;">烤瓷全木门系</div>
<div style="left:140px;top:360px;white-space:nowrap;height:18px;line-height:18px;font-size:12px;">单开门</div>
<div style="left:221px;top:360px;white-space:nowrap;height:18px;line-height:18px;font-size:12px;">202</div>
<div style="left:492px;top:362px;white-space:nowrap;height:18px;line-height:18px;font-weight:bold;font-size:15px;">2000</div>
<div style="left:563px;top:362px;white-space:nowrap;height:18px;line-height:18px;font-weight:bold;font-size:15px;">850</div>
<div style="left:612px;top:362px;white-space:nowrap;height:18px;line-height:18px;font-weight:bold;font-size:15px;">300</div>
<div style="left:667px;top:362px;white-space:nowrap;height:18px;line-height:18px;font-weight:bold;font-size:15px;">1</div>
<div style="left:732px;top:360px;white-space:nowrap;height:18px;line-height:18px;font-size:12px;">实木套</div>
<div style="left:805px;top:360px;white-space:nowrap;height:18px;line-height:18px;font-size:12px;">6.5公分实木线</div>
<div style="left:1014px;top:360px;white-space:nowrap;height:18px;line-height:18px;font-size:12px;">520</div>
<div style="left:1095px;top:360px;white-space:nowrap;height:18px;line-height:18px;font-size:12px;">520</div>
<div style="left:1322px;top:360px;white-space:nowrap;height:18px;line-height:18px;font-size:12px;">520</div>
<div style="left:49px;top:383px;white-space:nowrap;height:18px;line-height:18px;font-size:12px;">烤瓷全木门系</div>
<div style="left:140px;top:383px;white-space:nowrap;height:18px;line-height:18px;font-size:12px;">单开门</div>
<div style="left:221px;top:383px;white-space:nowrap;height:18px;line-height:18px;font-size:12px;">202</div>
<div style="left:492px;top:385px;white-space:nowrap;height:18px;line-height:18px;font-weight:bold;font-size:15px;">2000</div>
<div style="left:563px;top:385px;white-space:nowrap;height:18px;line-height:18px;font-weight:bold;font-size:15px;">850</div>
<div style="left:612px;top:385px;white-space:nowrap;height:18px;line-height:18px;font-weight:bold;font-size:15px;">300</div>
<div style="left:667px;top:385px;white-space:nowrap;height:18px;line-height:18px;font-weight:bold;font-size:15px;">1</div>
<div style="left:732px;top:383px;white-space:nowrap;height:18px;line-height:18px;font-size:12px;">实木套</div>
<div style="left:805px;top:383px;white-space:nowrap;height:18px;line-height:18px;font-size:12px;">6.5公分实木线</div>
<div style="left:1014px;top:383px;white-space:nowrap;height:18px;line-height:18px;font-size:12px;">520</div>
<div style="left:1095px;top:383px;white-space:nowrap;height:18px;line-height:18px;font-size:12px;">520</div>
<div style="left:1322px;top:383px;white-space:nowrap;height:18px;line-height:18px;font-size:12px;">520</div>
<div style="left:49px;top:407px;white-space:nowrap;height:18px;line-height:18px;font-weight:bold;font-size:13px;">烤瓷全木门</div>
<div style="left:140px;top:407px;white-space:nowrap;height:18px;line-height:18px;font-weight:bold;font-size:13px;">单开门</div>
<div style="left:221px;top:407px;white-space:nowrap;height:18px;line-height:18px;font-weight:bold;font-size:13px;">202</div>
<div style="left:492px;top:407px;white-space:nowrap;height:18px;line-height:18px;font-weight:bold;font-size:13.5px;">2000</div>
<div style="left:563px;top:407px;white-space:nowrap;height:18px;line-height:18px;font-weight:bold;font-size:13.5px;">850</div>
<div style="left:612px;top:407px;white-space:nowrap;height:18px;line-height:18px;font-weight:bold;font-size:13.5px;">300</div>
<div style="left:667px;top:407px;white-space:nowrap;height:18px;line-height:18px;font-weight:bold;font-size:13.5px;">1</div>
<div style="left:732px;top:407px;white-space:nowrap;height:18px;line-height:18px;font-weight:bold;font-size:13px;">实木套</div>
<div style="left:805px;top:407px;white-space:nowrap;height:18px;line-height:18px;font-weight:bold;font-size:13px;">6.5公分实木</div>
<div style="left:1014px;top:407px;white-space:nowrap;height:18px;line-height:18px;font-weight:bold;font-size:13.5px;">520</div>
<div style="left:1095px;top:407px;white-space:nowrap;height:18px;line-height:18px;font-weight:bold;font-size:13.5px;">520</div>
<div style="left:1322px;top:407px;white-space:nowrap;height:18px;line-height:18px;font-weight:bold;font-size:13.5px;">520</div>
<div style="left:49px;top:430px;white-space:nowrap;height:17px;line-height:17px;font-size:12px;">0</div>
<div style="left:492px;top:431px;white-space:nowrap;height:18px;line-height:18px;font-weight:bold;font-size:13.5px;">0</div>
<div style="left:563px;top:431px;white-space:nowrap;height:18px;line-height:18px;font-weight:bold;font-size:13.5px;">0</div>
<div style="left:612px;top:431px;white-space:nowrap;height:18px;line-height:18px;font-weight:bold;font-size:13.5px;">0</div>
<div style="left:667px;top:431px;white-space:nowrap;height:18px;line-height:18px;font-weight:bold;font-size:13.5px;">0</div>
<div style="left:1014px;top:430px;white-space:nowrap;height:17px;line-height:17px;font-size:12px;">0</div>
<div style="left:1095px;top:430px;white-space:nowrap;height:17px;line-height:17px;font-size:12px;">0</div>
<div style="left:890px;top:404px;width:117px;height:22px;border:1px dotted #000;box-sizing:border-box;"></div>
<div style="left:32px;top:410px;width:0;height:0;border-top:5px solid transparent;border-bottom:5px solid transparent;border-left:5px solid #000"></div>
<svg style="position:absolute;left:10px;top:433px" width="11" height="11"><path d="M5.5,0.5 V10.5 M0.8,5.5 H10.2 M2.2,2.2 L8.8,8.8 M8.8,2.2 L2.2,8.8" stroke="#000" stroke-width="1.3"/></svg>
<div style="left:0px;top:449px;width:1427px;height:126px;background:#fff;"></div>
<div style="left:0px;top:575px;width:1427px;height:1px;background:#c5cad8;"></div>
<div style="left:0px;top:576px;width:1427px;height:20px;background:#fff;"></div>
<div style="left:291px;top:576px;width:1px;height:20px;background:#808080;"></div>
<div style="left:660px;top:576px;width:65px;height:20px;background:#d6d6d6;border-left:1px solid #c5cad8;border-right:1px solid #c5cad8;box-sizing:border-box;"></div>
<div style="left:1088px;top:576px;width:75px;height:20px;background:#d6d6d6;border-left:1px solid #c5cad8;border-right:1px solid #c5cad8;box-sizing:border-box;"></div>
<div style="left:664px;top:578px;white-space:nowrap;height:16px;line-height:16px;font-size:12px;">5</div>
<div style="left:1095px;top:578px;white-space:nowrap;height:16px;line-height:16px;font-size:12px;">¥2,600.00</div>
<div style="left:0px;top:596px;width:1427px;height:19px;background:#eeeeee;border-top:1px solid #c5c9d5;border-bottom:2px solid #c8ccd6;box-sizing:border-box;"></div>
<div style="left:1px;top:601px;width:0;height:0;border-top:4px solid transparent;border-bottom:4px solid transparent;border-right:5px solid #3a4a70"></div>
<div style="left:1415px;top:601px;width:0;height:0;border-top:4px solid transparent;border-bottom:4px solid transparent;border-left:5px solid #3a4a70"></div>
<div style="left:1426px;top:240px;width:1px;height:375px;background:#c5c9d5;"></div>
<div style="left:11px;top:598px;width:1052px;height:15px;background:linear-gradient(#e4e9ef 0%,#c9d3de 45%,#a9b7c8 55%,#b8c4d2 100%);border:1px solid #60709a;border-radius:2px;box-sizing:border-box;"></div>
<div style="left:533px;top:602px;width:1px;height:6px;background:#7a7a7a;"></div>
<div style="left:535px;top:602px;width:1px;height:6px;background:#7a7a7a;"></div>
<div style="left:537px;top:602px;width:1px;height:6px;background:#7a7a7a;"></div>
<div style="left:539px;top:602px;width:1px;height:6px;background:#7a7a7a;"></div>
<div style="left:0px;top:615px;width:1427px;height:10px;background:linear-gradient(#fafafa,#ededed);"></div>
<div style="left:689px;top:616px;width:35px;height:8px;background:#fdd46a;"></div>
<div style="left:703px;top:618px;width:0;height:0;border-left:4px solid transparent;border-right:4px solid transparent;border-top:3px solid #fff"></div>
<div style="left:702px;top:231px;width:0;height:0;border-left:4px solid transparent;border-right:4px solid transparent;border-bottom:3px solid #fff"></div>
<div style="left:0px;top:625px;width:1427px;height:24px;background:#bfdbff;border-bottom:1px solid #8db2e3;box-sizing:border-box;"></div>
<div style="left:0px;top:626px;width:51px;height:23px;background:linear-gradient(#f3f7fd,#e0ebf9);border:1px solid #fff;border-left:none;border-bottom:none;border-radius:0 3px 0 0;box-sizing:border-box;"></div>
<div style="left:-3px;top:630px;white-space:nowrap;height:17px;line-height:17px;font-size:12px;color:#15428b;">产品配置</div>
<div style="left:63px;top:630px;white-space:nowrap;height:17px;line-height:17px;font-size:12px;color:#15428b;">加工说明</div>
<div style="left:130px;top:630px;white-space:nowrap;height:17px;line-height:17px;font-size:12px;color:#15428b;">价格计算</div>
<div style="left:197px;top:630px;white-space:nowrap;height:17px;line-height:17px;font-size:12px;color:#15428b;">文件列表</div>
<div style="left:264px;top:630px;white-space:nowrap;height:17px;line-height:17px;font-size:12px;color:#15428b;">订单线条</div>
<div style="left:331px;top:630px;white-space:nowrap;height:17px;line-height:17px;font-size:12px;color:#15428b;">套件备注</div>
<div style="left:398px;top:630px;white-space:nowrap;height:17px;line-height:17px;font-size:12px;color:#15428b;">拍照功能</div>
<div style="left:465px;top:630px;white-space:nowrap;height:17px;line-height:17px;font-size:12px;color:#15428b;">加价记录</div>
<div style="left:532px;top:630px;white-space:nowrap;height:17px;line-height:17px;font-size:12px;color:#15428b;">基础价格</div>
<div style="left:599px;top:630px;white-space:nowrap;height:17px;line-height:17px;font-size:12px;color:#15428b;">收款分配</div>
<div style="left:666px;top:630px;white-space:nowrap;height:17px;line-height:17px;font-size:12px;color:#15428b;">门型图片</div>
<div style="left:0px;top:649px;width:1036px;height:24px;background:linear-gradient(#f7f8fb,#e9edf4 50%,#d6dde9);"></div>
<div style="left:0px;top:649px;width:27px;height:24px;background:#d3e2f2;"></div>
<div style="left:27px;top:649px;width:1px;height:24px;background:#c5cad8;"></div>
<div style="left:302px;top:649px;width:1px;height:24px;background:#c5cad8;"></div>
<div style="left:501px;top:649px;width:1px;height:24px;background:#c5cad8;"></div>
<div style="left:632px;top:649px;width:1px;height:24px;background:#c5cad8;"></div>
<div style="left:722px;top:649px;width:1px;height:24px;background:#c5cad8;"></div>
<div style="left:800px;top:649px;width:1px;height:24px;background:#c5cad8;"></div>
<div style="left:877px;top:649px;width:1px;height:24px;background:#c5cad8;"></div>
<div style="left:943px;top:649px;width:1px;height:24px;background:#c5cad8;"></div>
<div style="left:1036px;top:649px;width:1px;height:24px;background:#c5cad8;"></div>
<div style="left:0px;top:672px;width:1036px;height:1px;background:#c5cad8;"></div>
<div style="left:129px;top:654px;white-space:nowrap;height:17px;line-height:17px;font-size:12px;color:#526079;">部件名称</div>
<svg style="position:absolute;left:279px;top:657px" width="12" height="9"><path d="M0.6,0.6 H10.6 L6.6,4.6 V7.8 H4.6 V4.6 Z" fill="none" stroke="#2e4d7b" stroke-width="1"/></svg>
<svg style="position:absolute;left:292px;top:658px" width="10" height="8"><path d="M0,3.5 H3 M3,0 V7 M3,1.5 H8.5 V5.5 H3" fill="none" stroke="#2e4d7b" stroke-width="1.1"/></svg>
<div style="left:377px;top:654px;white-space:nowrap;height:17px;line-height:17px;font-size:12px;color:#526079;">颜色</div>
<svg style="position:absolute;left:478px;top:657px" width="12" height="9"><path d="M0.6,0.6 H10.6 L6.6,4.6 V7.8 H4.6 V4.6 Z" fill="none" stroke="#2e4d7b" stroke-width="1"/></svg>
<svg style="position:absolute;left:491px;top:658px" width="10" height="8"><path d="M0,3.5 H3 M3,0 V7 M3,1.5 H8.5 V5.5 H3" fill="none" stroke="#2e4d7b" stroke-width="1.1"/></svg>
<div style="left:543px;top:654px;white-space:nowrap;height:17px;line-height:17px;font-size:12px;color:#526079;">型号</div>
<svg style="position:absolute;left:609px;top:657px" width="12" height="9"><path d="M0.6,0.6 H10.6 L6.6,4.6 V7.8 H4.6 V4.6 Z" fill="none" stroke="#2e4d7b" stroke-width="1"/></svg>
<svg style="position:absolute;left:622px;top:658px" width="10" height="8"><path d="M0,3.5 H3 M3,0 V7 M3,1.5 H8.5 V5.5 H3" fill="none" stroke="#2e4d7b" stroke-width="1.1"/></svg>
<div style="left:646px;top:654px;white-space:nowrap;height:17px;line-height:17px;font-size:12px;color:#526079;">数量</div>
<svg style="position:absolute;left:687px;top:655px" width="10" height="13"><path d="M8.6,2.8 V0.8 H0.8 L4.8,6.3 L0.8,11.6 H8.6 V9.6" fill="none" stroke="#2e4d7b" stroke-width="1.7"/></svg>
<svg style="position:absolute;left:699px;top:657px" width="12" height="9"><path d="M0.6,0.6 H10.6 L6.6,4.6 V7.8 H4.6 V4.6 Z" fill="none" stroke="#2e4d7b" stroke-width="1"/></svg>
<svg style="position:absolute;left:712px;top:658px" width="10" height="8"><path d="M0,3.5 H3 M3,0 V7 M3,1.5 H8.5 V5.5 H3" fill="none" stroke="#2e4d7b" stroke-width="1.1"/></svg>
<div style="left:737px;top:654px;white-space:nowrap;height:17px;line-height:17px;font-size:12px;color:#526079;">高</div>
<svg style="position:absolute;left:765px;top:655px" width="10" height="13"><path d="M8.6,2.8 V0.8 H0.8 L4.8,6.3 L0.8,11.6 H8.6 V9.6" fill="none" stroke="#2e4d7b" stroke-width="1.7"/></svg>
<svg style="position:absolute;left:777px;top:657px" width="12" height="9"><path d="M0.6,0.6 H10.6 L6.6,4.6 V7.8 H4.6 V4.6 Z" fill="none" stroke="#2e4d7b" stroke-width="1"/></svg>
<svg style="position:absolute;left:790px;top:658px" width="10" height="8"><path d="M0,3.5 H3 M3,0 V7 M3,1.5 H8.5 V5.5 H3" fill="none" stroke="#2e4d7b" stroke-width="1.1"/></svg>
<div style="left:814px;top:654px;white-space:nowrap;height:17px;line-height:17px;font-size:12px;color:#526079;">宽</div>
<svg style="position:absolute;left:842px;top:655px" width="10" height="13"><path d="M8.6,2.8 V0.8 H0.8 L4.8,6.3 L0.8,11.6 H8.6 V9.6" fill="none" stroke="#2e4d7b" stroke-width="1.7"/></svg>
<svg style="position:absolute;left:854px;top:657px" width="12" height="9"><path d="M0.6,0.6 H10.6 L6.6,4.6 V7.8 H4.6 V4.6 Z" fill="none" stroke="#2e4d7b" stroke-width="1"/></svg>
<svg style="position:absolute;left:867px;top:658px" width="10" height="8"><path d="M0,3.5 H3 M3,0 V7 M3,1.5 H8.5 V5.5 H3" fill="none" stroke="#2e4d7b" stroke-width="1.1"/></svg>
<div style="left:886px;top:654px;white-space:nowrap;height:17px;line-height:17px;font-size:12px;color:#526079;">不配</div>
<svg style="position:absolute;left:920px;top:657px" width="12" height="9"><path d="M0.6,0.6 H10.6 L6.6,4.6 V7.8 H4.6 V4.6 Z" fill="none" stroke="#2e4d7b" stroke-width="1"/></svg>
<svg style="position:absolute;left:933px;top:658px" width="10" height="8"><path d="M0,3.5 H3 M3,0 V7 M3,1.5 H8.5 V5.5 H3" fill="none" stroke="#2e4d7b" stroke-width="1.1"/></svg>
<div style="left:970px;top:654px;white-space:nowrap;height:17px;line-height:17px;font-size:12px;color:#526079;">更改人</div>
<svg style="position:absolute;left:1031px;top:657px" width="12" height="9"><path d="M0.6,0.6 H10.6 L6.6,4.6 V7.8 H4.6 V4.6 Z" fill="none" stroke="#2e4d7b" stroke-width="1"/></svg>
<svg style="position:absolute;left:2px;top:654px" width="16" height="16"><rect x="3.5" y="0.5" width="10.5" height="9.5" fill="#fff" stroke="#34306e"/><rect x="4" y="1" width="9.5" height="2.5" fill="#9a92d0"/><path d="M4,6.5 H13.5" stroke="#a59ed4"/><rect x="0.5" y="4.5" width="6.5" height="10" fill="#fff" stroke="#34306e"/><rect x="1" y="5" width="5.5" height="1.5" fill="#9a92d0"/><path d="M1,8.5 H6.5 M1,11.5 H6.5" stroke="#a59ed4"/><path d="M4.5,6.2 H7 Q9.5,6.2 9.5,3.2" fill="none" stroke="#1c1a40" stroke-width="1.2"/><path d="M7.5,3.5 L9.5,1 L11.5,3.5 Z" fill="#1c1a40"/></svg>
<div style="left:0px;top:673px;width:27px;height:116px;background:#d3e2f2;"></div>
<div style="left:27px;top:673px;width:1009px;height:23px;background:linear-gradient(#fdd9a6 0%,#fbb75e 45%,#f9a73a 55%,#fde28e 100%);"></div>
<div style="left:27px;top:696px;width:1009px;height:23px;background:#fff;"></div>
<div style="left:27px;top:719px;width:1009px;height:23px;background:#fff;"></div>
<div style="left:27px;top:742px;width:1009px;height:23px;background:#fff;"></div>
<div style="left:27px;top:765px;width:1009px;height:23px;background:#fff;"></div>
<div style="left:302px;top:673px;width:199px;height:116px;background:#fffedc;"></div>
<div style="left:501px;top:673px;width:131px;height:46px;background:#fffedc;"></div>
<div style="left:501px;top:719px;width:131px;height:46px;background:#fffedc;"></div>
<div style="left:0px;top:673px;width:1036px;height:1px;background:#c5cad8;"></div>
<div style="left:0px;top:696px;width:1036px;height:1px;background:#c5cad8;"></div>
<div style="left:0px;top:719px;width:1036px;height:1px;background:#c5cad8;"></div>
<div style="left:0px;top:742px;width:1036px;height:1px;background:#c5cad8;"></div>
<div style="left:0px;top:765px;width:1036px;height:1px;background:#c5cad8;"></div>
<div style="left:0px;top:788px;width:1036px;height:1px;background:#c5cad8;"></div>
<div style="left:302px;top:696px;width:199px;height:1px;background:#fffedc;"></div>
<div style="left:302px;top:719px;width:199px;height:1px;background:#fffedc;"></div>
<div style="left:302px;top:742px;width:199px;height:1px;background:#fffedc;"></div>
<div style="left:302px;top:765px;width:199px;height:1px;background:#fffedc;"></div>
<div style="left:501px;top:696px;width:131px;height:1px;background:#fffedc;"></div>
<div style="left:501px;top:742px;width:131px;height:1px;background:#fffedc;"></div>
<div style="left:27px;top:673px;width:1px;height:116px;background:#c5cad8;"></div>
<div style="left:302px;top:673px;width:1px;height:116px;background:#c5cad8;"></div>
<div style="left:501px;top:673px;width:1px;height:116px;background:#c5cad8;"></div>
<div style="left:632px;top:673px;width:1px;height:116px;background:#c5cad8;"></div>
<div style="left:722px;top:673px;width:1px;height:116px;background:#c5cad8;"></div>
<div style="left:800px;top:673px;width:1px;height:116px;background:#c5cad8;"></div>
<div style="left:877px;top:673px;width:1px;height:116px;background:#c5cad8;"></div>
<div style="left:943px;top:673px;width:1px;height:116px;background:#c5cad8;"></div>
<div style="left:1036px;top:673px;width:1px;height:116px;background:#c5cad8;"></div>
<div style="left:34px;top:676px;white-space:nowrap;height:18px;line-height:18px;font-weight:bold;font-size:13px;">门扇</div>
<div style="left:639px;top:676px;white-space:nowrap;height:18px;line-height:18px;font-weight:bold;font-size:13.5px;">1</div>
<div style="left:729px;top:676px;white-space:nowrap;height:18px;line-height:18px;font-weight:bold;font-size:13.5px;">2000</div>
<div style="left:807px;top:676px;white-space:nowrap;height:18px;line-height:18px;font-weight:bold;font-size:13.5px;">850</div>
<div style="left:950px;top:676px;white-space:nowrap;height:18px;line-height:18px;font-weight:bold;font-size:13px;">出纳 02-23 13:5</div>
<div style="left:903px;top:679px;width:12px;height:12px;background:linear-gradient(135deg,#dfe3ea,#fdfdfe);border:1px solid #9aa9bf;box-sizing:border-box;"></div>
<div style="left:34px;top:699px;white-space:nowrap;height:17px;line-height:17px;font-size:12px;">门套</div>
<div style="left:639px;top:699px;white-space:nowrap;height:17px;line-height:17px;font-size:12px;">1</div>
<div style="left:729px;top:701px;white-space:nowrap;height:18px;line-height:18px;font-weight:bold;font-size:15px;">2015</div>
<div style="left:807px;top:701px;white-space:nowrap;height:18px;line-height:18px;font-weight:bold;font-size:15px;">890</div>
<div style="left:950px;top:699px;white-space:nowrap;height:17px;line-height:17px;font-size:12px;">出纳 02-23 13:5</div>
<div style="left:903px;top:702px;width:12px;height:12px;background:linear-gradient(135deg,#dfe3ea,#fdfdfe);border:1px solid #9aa9bf;box-sizing:border-box;"></div>
<div style="left:34px;top:722px;white-space:nowrap;height:17px;line-height:17px;font-size:12px;">立板</div>
<div style="left:639px;top:722px;white-space:nowrap;height:17px;line-height:17px;font-size:12px;">2</div>
<div style="left:729px;top:724px;white-space:nowrap;height:18px;line-height:18px;font-weight:bold;font-size:15px;">2015</div>
<div style="left:807px;top:724px;white-space:nowrap;height:18px;line-height:18px;font-weight:bold;font-size:15px;">300</div>
<div style="left:950px;top:722px;white-space:nowrap;height:17px;line-height:17px;font-size:12px;">出纳 02-23 13:5</div>
<div style="left:903px;top:725px;width:12px;height:12px;background:linear-gradient(135deg,#dfe3ea,#fdfdfe);border:1px solid #9aa9bf;box-sizing:border-box;"></div>
<div style="left:34px;top:745px;white-space:nowrap;height:17px;line-height:17px;font-size:12px;">顶板</div>
<div style="left:639px;top:745px;white-space:nowrap;height:17px;line-height:17px;font-size:12px;">1</div>
<div style="left:729px;top:747px;white-space:nowrap;height:18px;line-height:18px;font-weight:bold;font-size:15px;">890</div>
<div style="left:807px;top:747px;white-space:nowrap;height:18px;line-height:18px;font-weight:bold;font-size:15px;">300</div>
<div style="left:950px;top:745px;white-space:nowrap;height:17px;line-height:17px;font-size:12px;">出纳 02-23 13:5</div>
<div style="left:903px;top:748px;width:12px;height:12px;background:linear-gradient(135deg,#dfe3ea,#fdfdfe);border:1px solid #9aa9bf;box-sizing:border-box;"></div>
<div style="left:34px;top:768px;white-space:nowrap;height:17px;line-height:17px;font-size:12px;">线条</div>
<div style="left:508px;top:768px;white-space:nowrap;height:17px;line-height:17px;font-size:12px;">6.5公分实木线</div>
<div style="left:639px;top:768px;white-space:nowrap;height:17px;line-height:17px;font-size:12px;">5</div>
<div style="left:729px;top:770px;white-space:nowrap;height:18px;line-height:18px;font-weight:bold;font-size:15px;">0</div>
<div style="left:807px;top:770px;white-space:nowrap;height:18px;line-height:18px;font-weight:bold;font-size:15px;">0</div>
<div style="left:903px;top:771px;width:12px;height:12px;background:linear-gradient(135deg,#dfe3ea,#fdfdfe);border:1px solid #9aa9bf;box-sizing:border-box;"></div>
<div style="left:508px;top:735px;white-space:nowrap;height:17px;line-height:17px;font-size:12px;">实木套</div>
<div style="left:18px;top:680px;width:0;height:0;border-top:5px solid transparent;border-bottom:5px solid transparent;border-left:5px solid #000"></div>
<div style="left:0px;top:789px;width:1036px;height:39px;background:#fff;"></div>
<div style="left:1036px;top:649px;width:9px;height:179px;background:linear-gradient(90deg,#c9c9c9,#f1f1f1 30%,#e6e6e6 70%,#bdbdbd);"></div>
<div style="left:1037px;top:731px;width:6px;height:35px;background:#fcd46c;"></div>
<div style="left:1045px;top:649px;width:382px;height:24px;background:linear-gradient(#f7f8fb,#e9edf4 50%,#d6dde9);"></div>
<div style="left:1045px;top:649px;width:1px;height:24px;background:#c5cad8;"></div>
<div style="left:1200px;top:649px;width:1px;height:24px;background:#c5cad8;"></div>
<div style="left:1355px;top:649px;width:1px;height:24px;background:#c5cad8;"></div>
<div style="left:1427px;top:649px;width:1px;height:24px;background:#c5cad8;"></div>
<div style="left:1045px;top:672px;width:382px;height:1px;background:#c5cad8;"></div>
<div style="left:1093px;top:654px;white-space:nowrap;height:17px;line-height:17px;font-size:12px;color:#526079;">参数名称</div>
<svg style="position:absolute;left:1190px;top:658px" width="10" height="8"><path d="M0,3.5 H3 M3,0 V7 M3,1.5 H8.5 V5.5 H3" fill="none" stroke="#2e4d7b" stroke-width="1.1"/></svg>
<div style="left:1255px;top:654px;white-space:nowrap;height:17px;line-height:17px;font-size:12px;color:#526079;">参数值</div>
<svg style="position:absolute;left:1345px;top:658px" width="10" height="8"><path d="M0,3.5 H3 M3,0 V7 M3,1.5 H8.5 V5.5 H3" fill="none" stroke="#2e4d7b" stroke-width="1.1"/></svg>
<div style="left:1372px;top:654px;white-space:nowrap;height:17px;line-height:17px;font-size:12px;color:#526079;">自动</div>
<svg style="position:absolute;left:1415px;top:658px" width="10" height="8"><path d="M0,3.5 H3 M3,0 V7 M3,1.5 H8.5 V5.5 H3" fill="none" stroke="#2e4d7b" stroke-width="1.1"/></svg>
<div style="left:1045px;top:673px;width:382px;height:23px;background:linear-gradient(#fdd9a6 0%,#fbb75e 45%,#f9a73a 55%,#fde28e 100%);"></div>
<div style="left:1045px;top:696px;width:382px;height:23px;background:#fff;"></div>
<div style="left:1045px;top:719px;width:382px;height:23px;background:#fff;"></div>
<div style="left:1045px;top:742px;width:382px;height:23px;background:#fff;"></div>
<div style="left:1045px;top:765px;width:382px;height:23px;background:#fff;"></div>
<div style="left:1045px;top:673px;width:382px;height:1px;background:#c5cad8;"></div>
<div style="left:1045px;top:696px;width:382px;height:1px;background:#c5cad8;"></div>
<div style="left:1045px;top:719px;width:382px;height:1px;background:#c5cad8;"></div>
<div style="left:1045px;top:742px;width:382px;height:1px;background:#c5cad8;"></div>
<div style="left:1045px;top:765px;width:382px;height:1px;background:#c5cad8;"></div>
<div style="left:1045px;top:788px;width:382px;height:1px;background:#c5cad8;"></div>
<div style="left:1045px;top:673px;width:1px;height:116px;background:#c5cad8;"></div>
<div style="left:1200px;top:673px;width:1px;height:116px;background:#c5cad8;"></div>
<div style="left:1355px;top:673px;width:1px;height:116px;background:#c5cad8;"></div>
<div style="left:1427px;top:673px;width:1px;height:116px;background:#c5cad8;"></div>
<div style="left:1052px;top:676px;white-space:nowrap;height:18px;line-height:18px;font-weight:bold;font-size:13px;">线条宽度</div>
<div style="left:1207px;top:676px;white-space:nowrap;height:18px;line-height:18px;font-weight:bold;font-size:13.5px;">65</div>
<div style="left:1384px;top:679px;width:12px;height:12px;background:linear-gradient(135deg,#dfe3ea,#fdfdfe);border:1px solid #9aa9bf;box-sizing:border-box;"><svg style="position:absolute;left:1px;top:1px" width="10" height="10"><path d="M2,4.5 L4.2,7.5 L8.5,1.5" fill="none" stroke="#2b4c8c" stroke-width="1.5"/></svg></div>
<div style="left:1052px;top:699px;white-space:nowrap;height:17px;line-height:17px;font-size:12px;">横线条延长量</div>
<div style="left:1384px;top:702px;width:12px;height:12px;background:linear-gradient(135deg,#dfe3ea,#fdfdfe);border:1px solid #9aa9bf;box-sizing:border-box;"><svg style="position:absolute;left:1px;top:1px" width="10" height="10"><path d="M2,4.5 L4.2,7.5 L8.5,1.5" fill="none" stroke="#2b4c8c" stroke-width="1.5"/></svg></div>
<div style="left:1052px;top:722px;white-space:nowrap;height:17px;line-height:17px;font-size:12px;">竖线条延长量</div>
<div style="left:1384px;top:725px;width:12px;height:12px;background:linear-gradient(135deg,#dfe3ea,#fdfdfe);border:1px solid #9aa9bf;box-sizing:border-box;"><svg style="position:absolute;left:1px;top:1px" width="10" height="10"><path d="M2,4.5 L4.2,7.5 L8.5,1.5" fill="none" stroke="#2b4c8c" stroke-width="1.5"/></svg></div>
<div style="left:1052px;top:745px;white-space:nowrap;height:17px;line-height:17px;font-size:12px;">单丁</div>
<div style="left:1207px;top:745px;white-space:nowrap;height:17px;line-height:17px;font-size:12px;">110</div>
<div style="left:1384px;top:748px;width:12px;height:12px;background:linear-gradient(135deg,#dfe3ea,#fdfdfe);border:1px solid #9aa9bf;box-sizing:border-box;"><svg style="position:absolute;left:1px;top:1px" width="10" height="10"><path d="M2,4.5 L4.2,7.5 L8.5,1.5" fill="none" stroke="#2b4c8c" stroke-width="1.5"/></svg></div>
<div style="left:1052px;top:768px;white-space:nowrap;height:17px;line-height:17px;font-size:12px;">双丁</div>
<div style="left:1207px;top:768px;white-space:nowrap;height:17px;line-height:17px;font-size:12px;">14</div>
<div style="left:1384px;top:771px;width:12px;height:12px;background:linear-gradient(135deg,#dfe3ea,#fdfdfe);border:1px solid #9aa9bf;box-sizing:border-box;"><svg style="position:absolute;left:1px;top:1px" width="10" height="10"><path d="M2,4.5 L4.2,7.5 L8.5,1.5" fill="none" stroke="#2b4c8c" stroke-width="1.5"/></svg></div>
<div style="left:1045px;top:789px;width:382px;height:39px;background:#fff;"></div>
<div style="left:1045px;top:789px;width:1px;height:39px;background:#c5cad8;"></div>
<div style="left:1216px;top:752px;width:128px;height:30px;background:#fff;border:1px solid #a0a0a0;box-sizing:border-box;box-shadow:1px 1px 2px rgba(0,0,0,.15);"></div>
<div style="left:1225px;top:758px;white-space:nowrap;height:17px;line-height:17px;font-size:12px;color:#222;">个性设置，点我看看</div>
<svg style="position:absolute;left:1222px;top:781px" width="14" height="8"><path d="M0,0 L7,7 L14,0" fill="#fff" stroke="#a0a0a0"/><rect x="1" y="-1" width="12" height="1.5" fill="#fff"/></svg>
<div style="left:1243px;top:790px;width:180px;height:24px;background:#fff;border:1px solid #d8d8d8;border-left:none;box-sizing:border-box;"></div>
<svg style="position:absolute;left:1215px;top:786px" width="30" height="30"><g transform="rotate(-12 15 15)"><rect x="3.5" y="3.5" width="23" height="23" rx="4" fill="#f2561d"/></g><path d="M21,9.5 C17,7 10,7.5 10,11.5 C10,15.5 20,14 20,18.5 C20,22.5 12,22.5 8.5,20" fill="none" stroke="#fff" stroke-width="3.4" stroke-linecap="round"/></svg>
<div style="left:1249px;top:792px;white-space:nowrap;height:20px;line-height:20px;font-size:15px;font-weight:bold;color:#1a6fd0;">中</div>
<div style="left:1272px;top:790px;white-space:nowrap;height:20px;line-height:20px;font-size:16px;font-weight:bold;color:#1a6fd0;">°,</div>
<svg style="position:absolute;left:1292px;top:793px" width="17" height="17"><circle cx="8.5" cy="8.5" r="7" fill="none" stroke="#1a6fd0" stroke-width="1.8"/><circle cx="6" cy="7" r="1" fill="#1a6fd0"/><circle cx="11" cy="7" r="1" fill="#1a6fd0"/><path d="M5,10 Q8.5,13.5 12,10" fill="none" stroke="#1a6fd0" stroke-width="1.4"/></svg>
<svg style="position:absolute;left:1316px;top:792px" width="14" height="19"><rect x="4" y="1" width="6" height="11" rx="3" fill="#1a6fd0"/><path d="M2,9 Q7,16 12,9 M7,13 V17 M4,17.5 H10" fill="none" stroke="#1a6fd0" stroke-width="1.6"/></svg>
<svg style="position:absolute;left:1337px;top:795px" width="17" height="13"><rect x="0" y="0" width="16" height="12" rx="1.5" fill="#1a6fd0"/><path d="M2.5,3.5 H14 M2.5,6 H14" stroke="#fff" stroke-width="1.3" stroke-dasharray="1.5,1"/><path d="M4,8.8 H12" stroke="#fff" stroke-width="1.3"/></svg>
<svg style="position:absolute;left:1361px;top:793px" width="15" height="17"><circle cx="6" cy="4.5" r="3.5" fill="#b8c6d6"/><path d="M0,16 Q1,8 6,9 Q11,8 12,16 Z" fill="#b8c6d6"/><rect x="8" y="10" width="7" height="7" fill="#fff"/><text x="9" y="16.5" font-size="7" fill="#8aa">2</text></svg>
<svg style="position:absolute;left:1382px;top:794px" width="15" height="15"><path d="M4,0.5 L0.5,4 L3,7 L3.5,14.5 H11.5 L12,7 L14.5,4 L11,0.5 Q7.5,3 4,0.5 Z" fill="#1a6fd0"/></svg>
<svg style="position:absolute;left:1403px;top:794px" width="15" height="15"><rect x="0" y="0" width="6.5" height="6.5" fill="#1a6fd0"/><rect x="8" y="0" width="6.5" height="6.5" fill="#1a6fd0"/><rect x="0" y="8" width="6.5" height="6.5" fill="#1a6fd0"/><rect x="8" y="8" width="6.5" height="6.5" fill="#1a6fd0"/></svg>
<svg style="position:absolute;left:1406px;top:761px" width="21" height="51"><circle cx="26" cy="25" r="24.5" fill="#e8efe6" stroke="#b9c7b6" stroke-width="1"/><circle cx="26" cy="25" r="22" fill="#3cae42"/><circle cx="26" cy="20" r="17" fill="#55c257" opacity="0.6"/><text x="7" y="30" font-size="14" font-weight="bold" fill="#fff" font-family="Liberation Sans">60</text></svg>
<svg style="position:absolute;left:0;top:0" width="1427" height="828"><path d="M790.5,473.5 L879,361.5 L874.3,356.7 L895.6,347 L888.8,369.3 L883.8,364.8 L792,474 Z" fill="#f23a3a"/></svg>
<div style="left:771px;top:494px;white-space:nowrap;height:22px;line-height:22px;font-size:19px;color:#eb3c3c;">按住鼠标左键从上向下拖动到需要填充到哪一行</div>
</body></html>
